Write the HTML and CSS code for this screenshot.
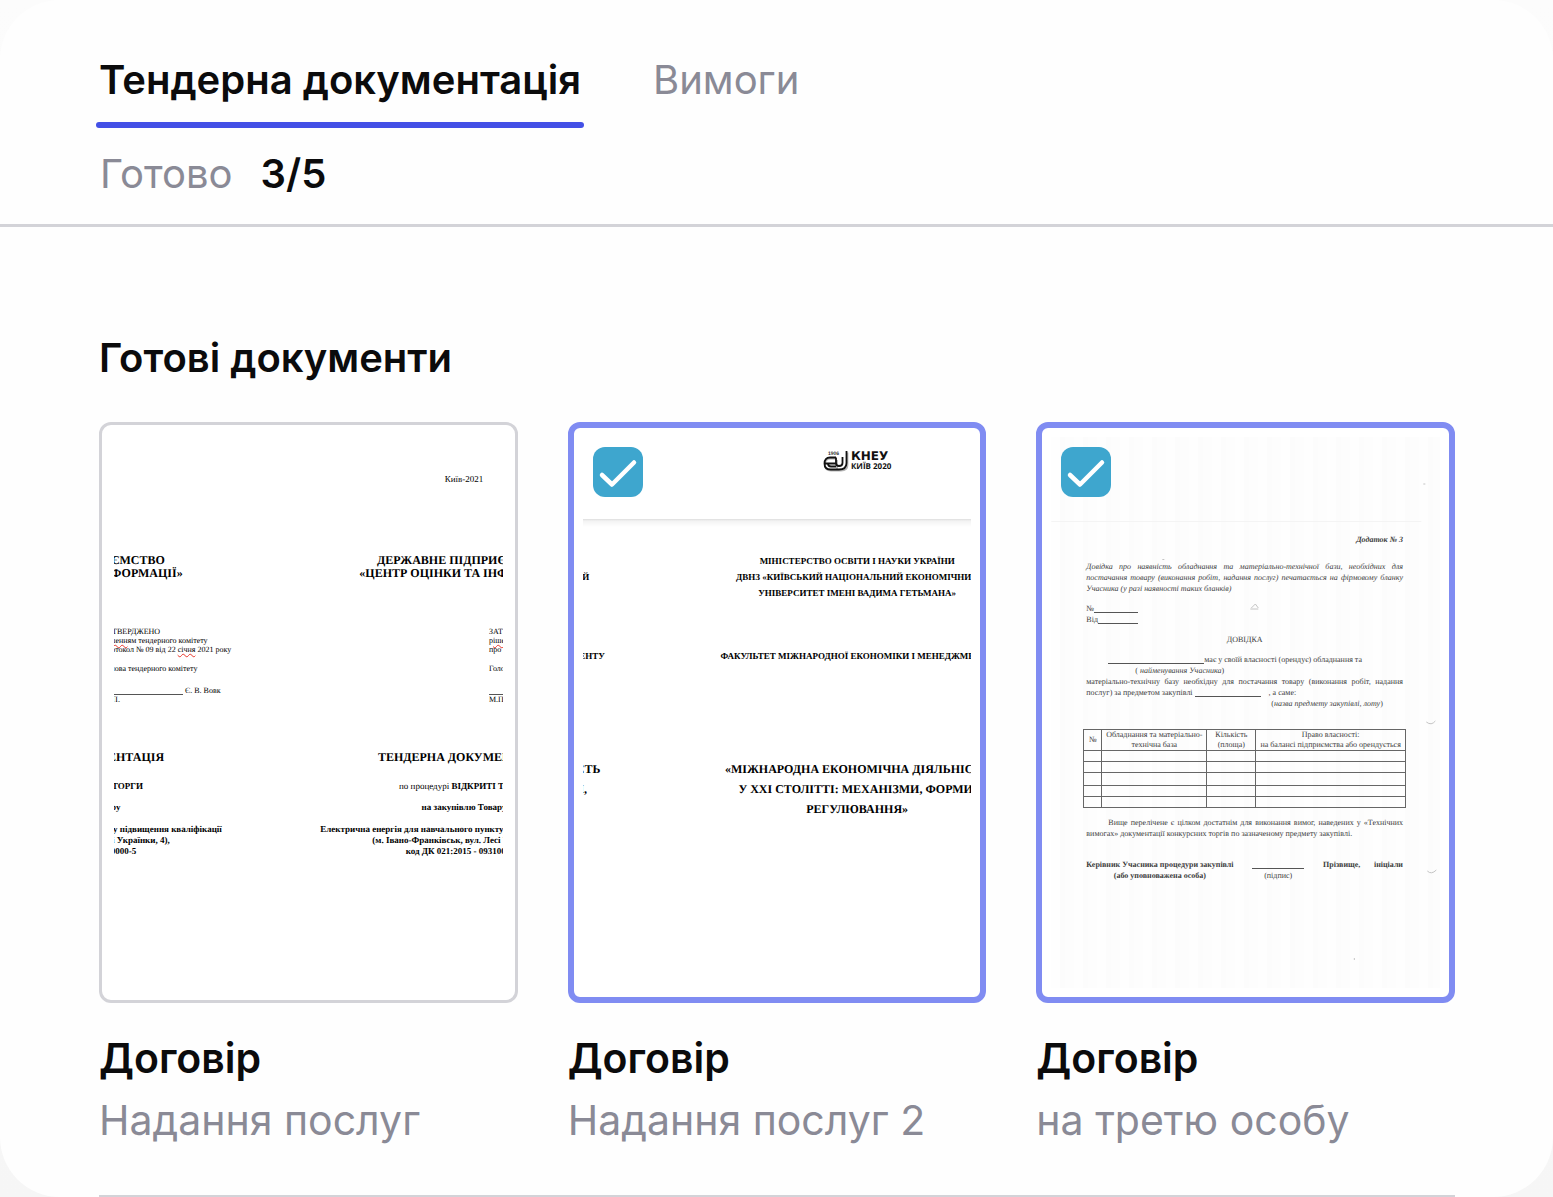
FILE: index.html
```html
<!DOCTYPE html>
<html lang="uk">
<head>
<meta charset="utf-8">
<meta name="viewport" content="width=device-width, initial-scale=1">
<title>Тендерна документація</title>
<link rel="stylesheet" href="styles.css">
</head>
<body>
<main class="panel">
  <header class="header">
    <nav class="tabs">
      <a class="tab tab-active" href="#docs" aria-current="page">Тендерна документація</a>
      <a class="tab" href="#requirements">Вимоги</a>
    </nav>
    <p class="progress"><span class="muted">Готово</span><strong>3/5</strong></p>
  </header>

  <section class="docs" id="docs">
    <h1 class="docs-title">Готові документи</h1>
    <div class="grid">

      <article class="card">
        <div class="thumb">
          <div class="viewport">
            <div class="spread spread-tender">
              <div class="sheet tender">
                <p class="city"><br></p>
                <p class="t-title">ДЕРЖАВНЕ ПІДПРИЄМСТВО<br>«ЦЕНТР ОЦІНКИ ТА ІНФОРМАЦІЇ»</p>
                <div class="approve">
                  <p>ЗАТВЕРДЖЕНО<br><span class="typo">рішенн</span>ям тендерного комітету<br>протокол № 09 від 22 <span class="typo">січня</span> 2021 року</p>
                  <p class="approve-head">Голова тендерного комітету</p>
                  <p class="approve-sign"><span class="blank blank-80"></span> Є. В. Вовк<br>М.П.</p>
                </div>
                <p class="t-title t-doc">ТЕНДЕРНА ДОКУМЕНТАЦІЯ</p>
                <p class="t-proc">по процедурі <b>ВІДКРИТІ ТОРГИ</b></p>
                <p class="t-goods">на закупівлю Товару</p>
                <p class="t-subject">Електрична енергія для навчального пункту підвищення кваліфікації<br>(м. Івано-Франківськ, вул. Лесі Українки, 4),<br>код ДК 021:2015 - 09310000-5</p>
              </div>
              <div class="sheet tender">
                <p class="city">Київ-2021</p>
                <p class="t-title">ДЕРЖАВНЕ ПІДПРИЄМСТВО<br>«ЦЕНТР ОЦІНКИ ТА ІНФОРМАЦІЇ»</p>
                <div class="approve">
                  <p>ЗАТ<br>р<span class="typo">іше</span><br>про</p>
                  <p class="approve-head">Голо</p>
                  <p class="approve-sign"><span class="blank blank-80"></span><br>М.П.</p>
                </div>
                <p class="t-title t-doc">ТЕНДЕРНА ДОКУМЕНТАЦІЯ</p>
                <p class="t-proc">по процедурі <b>ВІДКРИТІ ТОРГИ</b></p>
                <p class="t-goods">на закупівлю Товару</p>
                <p class="t-subject">Електрична енергія для навчального пункту підвищення кваліфікації<br>(м. Івано-Франківськ, вул. Лесі Українки, 4),<br>код ДК 021:2015 - 09310000-5</p>
              </div>
            </div>
          </div>
        </div>
        <h2 class="card-title">Договір</h2>
        <p class="card-note">Надання послуг</p>
      </article>

      <article class="card">
        <div class="thumb thumb-selected">
          <label class="check">
            <input type="checkbox" checked aria-label="Надання послуг 2">
            <svg viewBox="0 0 50 50" aria-hidden="true"><path d="M9 28L19 37.500L41 15.500"/></svg>
          </label>
          <div class="viewport">
            <div class="spread spread-kneu">
              <div class="sheet kneu">
                <div class="band"></div>
                <p class="k-ministry"><br>ДВНЗ «КИЇВСЬКИЙ НАЦІОНАЛЬНИЙ ЕКОНОМІЧНИЙ<br><br></p>
                <p class="k-faculty">ФАКУЛЬТЕТ МІЖНАРОДНОЇ ЕКОНОМІКИ І МЕНЕДЖМЕНТУ</p>
                <p class="k-title">«МІЖНАРОДНА ЕКОНОМІЧНА ДІЯЛЬНІСТЬ<br>У ХХІ СТОЛІТТІ: МЕХАНІЗМИ, ФОРМИ,</p>
              </div>
              <div class="sheet kneu">
                <div class="band">
                  <svg class="emblem" viewBox="0 0 26 22" aria-hidden="true">
                    <path class="emblem-shade" d="M13 8.500H7.500Q2 8.500 2 14.500Q2 20.500 8 20.500H14M14 10V20.500H18Q24.500 20.500 24.500 15V2.500"/>
                    <path d="M13 7.500H7Q1.500 7.500 1.500 13.500Q1.500 19.500 7.500 19.500H16Q23.500 19.500 23.500 13V1M2 13.500H12.500M13 7.500V13Q13 16 16 16Q19.500 16 19.500 13V7M5 13.500Q5 16.500 8 16.500H13"/>
                    <text x="5" y="5">1906</text>
                  </svg>
                  <div class="band-text"><span class="band-name">КНЕУ</span><span class="band-year">КИЇВ 2020</span></div>
                </div>
                <p class="k-ministry">МІНІСТЕРСТВО ОСВІТИ І НАУКИ УКРАЇНИ<br>ДВНЗ «КИЇВСЬКИЙ НАЦІОНАЛЬНИЙ ЕКОНОМІЧНИЙ<br>УНІВЕРСИТЕТ ІМЕНІ ВАДИМА ГЕТЬМАНА»</p>
                <p class="k-faculty">ФАКУЛЬТЕТ МІЖНАРОДНОЇ ЕКОНОМІКИ І МЕНЕДЖМЕНТУ</p>
                <p class="k-title">«МІЖНАРОДНА ЕКОНОМІЧНА ДІЯЛЬНІСТЬ<br>У ХХІ СТОЛІТТІ: МЕХАНІЗМИ, ФОРМИ,<br>РЕГУЛЮВАННЯ»</p>
              </div>
            </div>
          </div>
        </div>
        <h2 class="card-title">Договір</h2>
        <p class="card-note">Надання послуг 2</p>
      </article>

      <article class="card">
        <div class="thumb thumb-selected">
          <label class="check">
            <input type="checkbox" checked aria-label="на третю особу">
            <svg viewBox="0 0 50 50" aria-hidden="true"><path d="M9 28L19 37.500L41 15.500"/></svg>
          </label>
          <div class="viewport">
            <div class="scan">
              <svg class="specks" viewBox="0 0 388 551" aria-hidden="true">
                <path class="fold" d="M0 84.500H370"/>
                <path d="M375 285Q380 289 384 284M376 434Q380 438 385 433M200 171L204 167L207 171M199 172H207"/>
                <path d="M111 122.500H113M303 521V523M372 47H374"/>
              </svg>
              <p class="s-annex">Додаток № 3</p>
              <p class="s-intro"><span class="full">Довідка про наявність обладнання та матеріально-технічної бази, необхідних для</span><span class="full">постачання товару (виконання робіт, надання послуг) печатається на фірмовому бланку</span>Учасника (у разі наявності таких бланків)</p>
              <p class="s-block">№<span class="blank blank-44"></span><br>Від<span class="blank blank-40"></span></p>
              <p class="s-block s-center">ДОВІДКА</p>
              <div class="s-block">
                <p class="indent-22"><span class="blank blank-96"></span>має у своїй власності (орендує) обладнання та</p>
                <p class="indent-49">( <i>найменування Учасника</i>)</p>
                <p><span class="full">матеріально-технічну базу необхідну для постачання товару (виконання робіт, надання</span></p>
                <p>послуг) за предметом закупівлі <span class="blank blank-68"></span><span class="after">, а саме:</span></p>
                <p class="indent-185">(<i>назва предмету закупівлі, лоту</i>)</p>
              </div>
              <table class="s-table">
                <thead><tr><th class="c-num">№</th><th class="c-item">Обладнання та матеріально-<br>технічна база</th><th class="c-qty">Кількість<br>(площа)</th><th>Право власності:<br>на балансі підприємства або орендується</th></tr></thead>
                <tbody>
                  <tr><td></td><td></td><td></td><td></td></tr>
                  <tr><td></td><td></td><td></td><td></td></tr>
                  <tr class="tall"><td></td><td></td><td></td><td></td></tr>
                  <tr><td></td><td></td><td></td><td></td></tr>
                  <tr><td></td><td></td><td></td><td></td></tr>
                </tbody>
              </table>
              <p><span class="full indent-22">Вище перелічене є цілком достатнім для виконання вимог, наведених у «Технічних</span>вимогах» документації конкурсних торгів по зазначеному предмету закупівлі.</p>
              <div class="s-sign">
                <p class="s-center"><b>Керівник Учасника процедури закупівлі<br>(або уповноважена особа)</b></p>
                <p class="s-center"><span class="blank blank-52"></span><br>(підпис)</p>
                <p class="s-name"><b>Прізвище,</b><b>ініціали</b></p>
              </div>
            </div>
          </div>
        </div>
        <h2 class="card-title">Договір</h2>
        <p class="card-note">на третю особу</p>
      </article>

    </div>
    <hr class="rule">
  </section>
</main>
</body>
</html>
```
FILE: styles.css
```css
* { box-sizing: border-box; }

html {
  background: linear-gradient(#fcfcfc, #f6f6f6);
  min-height: 100%;
}

body {
  margin: 0;
  font: 400 40px/48px Inter, "Liberation Sans", sans-serif;
  color: #0b0b0c;
}

p, h1, h2 { margin: 0; }

.panel {
  min-height: 100vh;
  background: #fefefe;
  border-radius: 60px;
  overflow: hidden;
}

/* Header */
.header {
  padding: 56px 96px 26px;
  border-bottom: 3px solid #d3d3d8;
}

.tabs {
  display: flex;
  gap: 66px;
}

.tab {
  padding: 0 3px 18px;
  color: #8a8a96;
  text-decoration: none;
}

.tab-active {
  color: #0b0b0c;
  font-weight: 600;
}

.tab-active::after {
  content: "";
  display: block;
  height: 6px;
  margin: 18px -3px -18px;
  border-radius: 3px;
  background: #4350e6;
}

.progress {
  display: flex;
  gap: 28px;
  padding: 22px 4px 0;
}

.progress strong { font-weight: 600; }
.muted { color: #8a8a96; }

/* Document cards */
.docs { padding: 107px 98px 0 99px; }

.docs-title, .card-title {
  font-size: 40px;
  line-height: 48px;
  font-weight: 600;
}

.grid {
  display: grid;
  grid-template-columns: repeat(3, minmax(0, 1fr));
  gap: 50px;
  padding-top: 40px;
}

.card-title {
  margin-top: 31px;
  font-size: 41px;
}

.card-note {
  margin-top: 14px;
  font-size: 41px;
  color: #8a8a96;
}

.rule {
  height: 2px;
  margin: 51px 0 0;
  border: 0;
  background: #d3d3d8;
}

.thumb {
  position: relative;
  padding: 12px;
  border: 3px solid #d3d3d8;
  border-radius: 12px;
  background: #fff;
}

.thumb-selected {
  padding: 9px;
  border: 6px solid #808cf2;
}

.viewport {
  min-height: 551px;
  overflow: hidden;
  font: 8px/11px "Liberation Serif", serif;
  color: #000;
  text-rendering: geometricPrecision;
}

.check {
  position: absolute;
  top: 19px;
  left: 19px;
  z-index: 1;
  display: grid;
  width: 50px;
  height: 50px;
}

.check input, .check svg {
  grid-area: 1 / 1;
  width: 100%;
  height: 100%;
  margin: 0;
}

.check input {
  appearance: none;
  border-radius: 12px;
  background: #3ea6ce;
}

.check path {
  fill: none;
  stroke: #fff;
  stroke-width: 4.5;
  stroke-linecap: round;
  stroke-linejoin: round;
}

.check input:not(:checked) + svg { display: none; }

.blank {
  display: inline-block;
  height: 8px;
  border-bottom: 1px solid #555;
  vertical-align: -2px;
}

.blank-40 { width: 40px; }
.blank-44 { width: 44px; }
.blank-52 { width: 52px; }
.blank-68 { width: 66px; }
.blank-80 { width: 80px; }
.blank-96 { width: 96px; }

/* Two neighbouring sheets seen through the thumbnail window */
.spread {
  display: flex;
  text-align: center;
  white-space: nowrap;
}

.sheet { flex: none; }
.spread-tender { margin-left: -229px; }
.spread-kneu { margin-left: -309px; }

.tender {
  width: 386px;
  padding-top: 37px;
  font-size: 9px;
}

.city { line-height: 10px; }

.t-title {
  margin-top: 70px;
  font-size: 12px;
  line-height: 13px;
  font-weight: 700;
}

.approve {
  margin: 47px 0 0 218px;
  font-size: 8px;
  line-height: 9px;
  text-align: left;
}

.approve-head { margin-top: 10px; }
.approve-sign { margin-top: 13px; }
.approve .blank { height: 7px; }

.typo {
  text-decoration: underline wavy #e8382c 1px;
  text-decoration-skip-ink: none;
}

.t-doc { margin-top: 47px; }
.t-proc { margin-top: 17px; }
.t-goods { margin-top: 10px; font-weight: 700; }
.t-subject { margin-top: 11px; font-weight: 700; }

.kneu {
  width: 389px;
  font-weight: 700;
}

.band {
  display: flex;
  justify-content: center;
  gap: 2px;
  height: 90px;
  padding-top: 13px;
  background: linear-gradient(#dedede, #f3f3f3 2px, #fff) bottom / 100% 8px no-repeat;
}

.emblem {
  width: 26px;
  height: 22px;
  fill: none;
  stroke: #111;
  stroke-width: 1.8;
}

.emblem-shade { stroke: #b5b5b5; }

.emblem text {
  font: 700 5px "Liberation Sans", sans-serif;
  fill: #333;
  stroke: none;
}

.band-text {
  display: flex;
  flex-direction: column;
  text-align: left;
  color: #111;
}

.band-name { font: 700 12px/12px "DejaVu Sans", sans-serif; }
.band-year { font: 700 8px/10px "Open Sans", sans-serif; }

.k-ministry, .k-faculty {
  font-size: 9px;
  line-height: 16px;
}

.k-ministry { margin-top: 26px; }
.k-faculty { margin-top: 47px; }

.k-title {
  margin-top: 95px;
  font-size: 12px;
  line-height: 20px;
}

/* Scanned form */
.scan {
  position: relative;
  min-height: 551px;
  padding: 98px 37px 0 35px;
  color: #3c3c3c;
  background: repeating-linear-gradient(90deg, #fefefe 0 9px, #fcfcfc 9px 14px, #fdfdfd 14px 23px);
}

.specks {
  position: absolute;
  inset: 0;
  width: 100%;
  height: 100%;
  fill: none;
  stroke: #c4c4c4;
}

.fold { stroke: #f4f4f4; }

.s-annex {
  line-height: 10px;
  font-weight: 700;
  font-style: italic;
  text-align: right;
}

.s-intro {
  margin-top: 16px;
  font-style: italic;
}

.s-block { margin-top: 9px; }
.s-center { text-align: center; }
.full { display: block; text-align: justify; text-align-last: justify; white-space: nowrap; }
.indent-22 { padding-left: 22px; }
.indent-49 { padding-left: 49px; }
.indent-185 { padding-left: 185px; }
.after { padding-left: 8px; }

.s-table {
  width: calc(100% + 6px);
  margin: 20px -3px 9px;
  border-collapse: collapse;
  table-layout: fixed;
  line-height: 10px;
}

.s-table th, .s-table td {
  height: 11px;
  padding: 0;
  border: 1px solid #666;
  font-weight: 400;
  white-space: nowrap;
}

.s-table .tall td { height: 13px; }
.c-num { width: 18px; }
.c-item { width: 105px; }
.c-qty { width: 49px; }

.s-sign {
  display: grid;
  grid-template-columns: 147px 52px 80px;
  justify-content: space-between;
  margin-top: 20px;
  white-space: nowrap;
}

.s-name {
  display: flex;
  justify-content: space-between;
}
```
